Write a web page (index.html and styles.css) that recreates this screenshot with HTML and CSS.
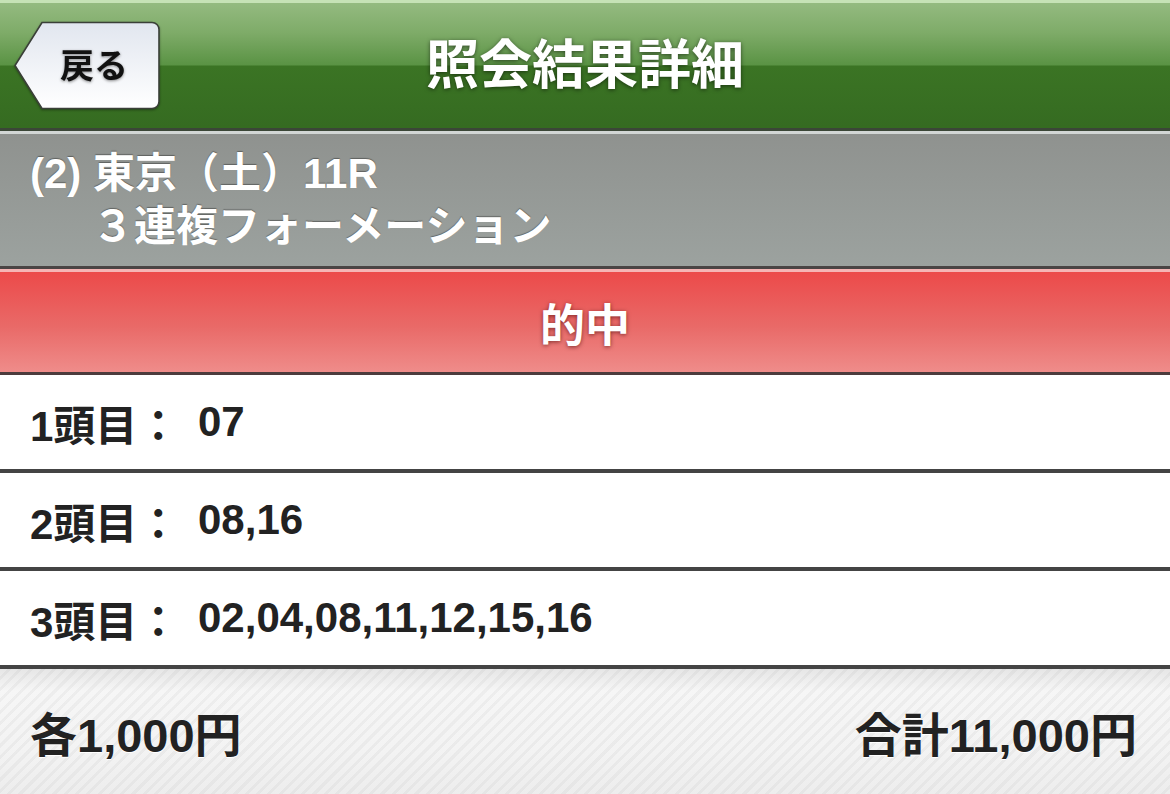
FILE: index.html
```html
<!DOCTYPE html>
<html lang="ja">
<head>
<meta charset="utf-8">
<title>照会結果詳細</title>
<link rel="stylesheet" href="styles.css">
</head>
<body>
<div class="page">
  <header class="topbar">
    <div class="back">
      <svg class="back-shape" width="148" height="90" viewBox="0 0 148 90">
        <defs>
          <linearGradient id="bg" x1="0" y1="0" x2="0" y2="1">
            <stop offset="0" stop-color="#e1e6ef"/>
            <stop offset="1" stop-color="#ffffff"/>
          </linearGradient>
        </defs>
        <path d="M29 1.5 H139 A7 7 0 0 1 146 8.5 V80.5 A7 7 0 0 1 139 87.5 H29 L2 44.5 Z" fill="url(#bg)" stroke="#3a3f38" stroke-width="1.6"/>
      </svg>
      <span class="back-label">戻る</span>
    </div>
    <h1 class="title">照会結果詳細</h1>
    <div class="spacer"></div>
  </header>
  <section class="race">
    <div class="race-line">(2) 東京（土）11R</div>
    <div class="race-line race-type">３連複フォーメーション</div>
  </section>
  <div class="hit">的中</div>
  <div class="row"><span class="label">1頭目：</span><span class="value">07</span></div>
  <div class="row"><span class="label">2頭目：</span><span class="value">08,16</span></div>
  <div class="row"><span class="label">3頭目：</span><span class="value">02,04,08,11,12,15,16</span></div>
  <footer class="total">
    <span>各1,000円</span>
    <span>合計11,000円</span>
  </footer>
</div>
</body>
</html>
```
FILE: styles.css
```css
html, body {
  margin: 0;
  padding: 0;
}
body {
  width: 1170px;
  height: 794px;
  overflow: hidden;
  font-family: "Liberation Sans", "Noto Sans CJK JP", sans-serif;
  font-weight: bold;
  background: #f2f2f2;
}
.page {
  display: flex;
  flex-direction: column;
  height: 794px;
}
.topbar {
  height: 125px;
  flex: none;
  border-top: 3px solid #c6e2b6;
  border-bottom: 3px solid #3b4637;
  background: linear-gradient(#94ba80 0px, #7eab68 30px, #5a9344 62px, #3b7424 63px, #356b21 125px);
  display: grid;
  grid-template-columns: 1fr auto 1fr;
  align-items: center;
}
.back {
  display: grid;
  justify-self: start;
  margin-left: 13px;
  filter: drop-shadow(0 1px 1px rgba(0,0,0,0.35));
}
.back-shape {
  grid-area: 1 / 1;
  display: block;
}
.back-label {
  grid-area: 1 / 1;
  align-self: center;
  justify-self: start;
  margin-left: 47px;
  font-size: 34px;
  color: #111;
  text-shadow: 0 1px 3px rgba(0,0,0,0.45);
  line-height: 1;
}
.title {
  margin: 0;
  font-size: 53px;
  color: #fff;
  line-height: 1;
  text-shadow: 0 1px 4px rgba(0,0,0,0.55);
  font-weight: bold;
}
.race {
  height: 138px;
  flex: none;
  box-sizing: border-box;
  border-top: 3px solid #d2d6d5;
  border-bottom: 3px solid #4a4545;
  background: linear-gradient(#8f928f, #9ca29f);
  padding: 13px 0 0 30px;
  color: #fff;
  text-shadow: 0 -1px 1px rgba(0,0,0,0.35);
  font-size: 42px;
}
.race-line {
  line-height: 53px;
}
.race-type {
  padding-left: 62px;
}
.hit {
  height: 100px;
  flex: none;
  border-top: 3px solid #f5b5b5;
  border-bottom: 3px solid #4c3b3d;
  background: linear-gradient(#ec4a4a, #e96a68 55%, #ef8c8a);
  display: flex;
  align-items: center;
  justify-content: center;
  color: #fff;
  font-size: 45px;
  text-shadow: 0 1px 4px rgba(60,0,0,0.6);
}
.row {
  height: 94px;
  flex: none;
  background: #fff;
  border-bottom: 4px solid #444;
  display: flex;
  align-items: center;
  padding-left: 30px;
  font-size: 42px;
  color: #222;
  text-shadow: 0 1px 0 #fff;
}
.row .label {
  width: 168px;
}
.total {
  flex: 1;
  display: flex;
  align-items: center;
  justify-content: space-between;
  padding: 0 33px 0 30px;
  font-size: 47px;
  color: #222;
  background:
    repeating-linear-gradient(135deg, rgba(0,0,0,0) 0px, rgba(0,0,0,0) 5px, rgba(0,0,0,0.035) 5px, rgba(0,0,0,0.035) 8px),
    linear-gradient(#e6e6e6 0px, #f6f6f6 22px, #f3f3f3 80px, #ededed 125px);
  text-shadow: 0 1px 0 #fff;
}
```
